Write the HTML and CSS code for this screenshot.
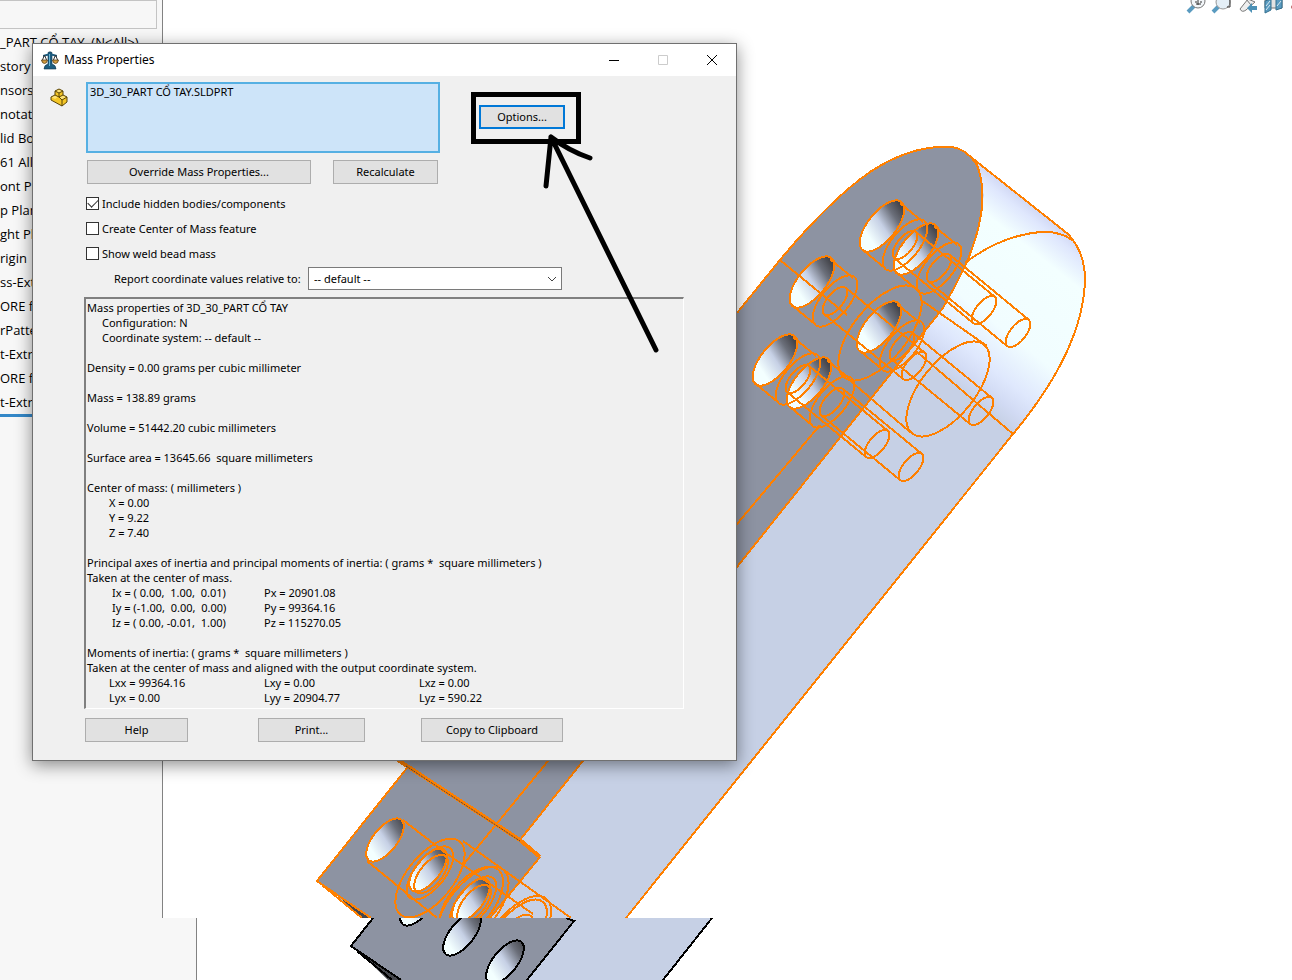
FILE: index.html
```html
<!DOCTYPE html>
<html lang="en">
<head>
<meta charset="utf-8">
<title>Mass Properties</title>
<link rel="stylesheet" href="styles.css">
</head>
<body>
<main class="desktop">
  <aside class="tree">
    <div class="tree-filter"></div>
    <ul class="tree-list">
      <li>_PART CỔ TAY&nbsp; (N&lt;All&gt;)</li>
      <li>story</li>
      <li>nsors</li>
      <li>notations</li>
      <li>lid Bodies</li>
      <li>61 Alloy</li>
      <li>ont Plane</li>
      <li>p Plane</li>
      <li>ght Plane</li>
      <li>rigin</li>
      <li>ss-Extrude</li>
      <li>ORE for</li>
      <li>rPattern</li>
      <li>t-Extrude</li>
      <li>ORE for</li>
      <li>t-Extrude</li>
    </ul>
    <div class="rollback"></div>
  </aside>

  <svg class="viewport" viewBox="0 0 1292 980" preserveAspectRatio="xMinYMin slice" aria-hidden="true">
    <defs>
      <clipPath id="upper"><rect x="163" y="0" width="1129" height="918"/></clipPath>
      <clipPath id="lower"><rect x="197" y="918" width="1095" height="62"/></clipPath>
      <linearGradient id="cap" gradientUnits="userSpaceOnUse" x1="1013" y1="434" x2="1131" y2="286">
        <stop offset="0" stop-color="#c6d0e5"/><stop offset=".1" stop-color="#d2dbf4"/>
        <stop offset=".2" stop-color="#dfe8fd"/>
        <stop offset=".4" stop-color="#f1fdff"/><stop offset=".82" stop-color="#f3ffff"/>
        <stop offset=".95" stop-color="#dfe7fd"/><stop offset="1" stop-color="#d3daf5"/>
      </linearGradient>
      <linearGradient id="bore" gradientUnits="userSpaceOnUse" x1="25" y1="8" x2="-16" y2="-5">
        <stop offset="0" stop-color="#45464c"/><stop offset=".25" stop-color="#6b6f7a"/>
        <stop offset=".6" stop-color="#c6d0e5"/><stop offset="1" stop-color="#f3ffff"/>
      </linearGradient>
      <ellipse id="hole" rx="31" ry="14" transform="rotate(-51)"/>
      <ellipse id="hole-sm" rx="26" ry="12" transform="rotate(-51)"/>
      <g id="shaft">
        <use href="#hole"/>
        <use href="#hole" x="23" y="19"/>
        <ellipse rx="17" ry="8" transform="translate(23 19) rotate(-51)"/>
        <ellipse rx="17" ry="8" transform="translate(102 84) rotate(-51)"/>
        <path d="M18-23l23 19M-19 24l23 19M34 6l79 65M12 32l79 65"/>
      </g>
    </defs>

    <g clip-path="url(#upper)">
      <path fill="#c6d0e5" d="M967 154L1068 234Q1085 252 1085 280Q1083 350 1013 434L626 918H480L520 839Z"/>
      <path fill="url(#cap)" d="M967 154L1068 234Q1085 252 1085 280Q1083 350 1013 434L880 380L966 264L984 195Z"/>
      <path fill="#8d93a2" d="M398 760L737 313L780 260Q830 200 870 172Q911 145 950 147Q966 148 977 165Q992 203 966 264Q955 287 943 308L737 567L520 840L540 857L490 918H371L317 881L407 768Z"/>
      <path fill="#45464c" d="M330 889L371 918H362Z"/>
      <g fill="url(#bore)">
        <use href="#hole" x="882" y="226"/><use href="#hole" x="916" y="249"/>
        <use href="#hole" x="812" y="282"/><use href="#hole" x="879" y="327"/>
        <use href="#hole" x="775" y="360"/><use href="#hole" x="809" y="383"/>
        <use href="#hole-sm" x="385" y="840"/><use href="#hole-sm" x="428" y="870"/>
        <use href="#hole-sm" x="471" y="900"/>
      </g>
      <g class="wire">
        <path d="M737 313L780 260Q830 200 870 172Q911 145 950 147Q966 148 977 165Q992 203 966 264Q955 287 943 308L737 567L520 840"/>
        <path d="M967 154L1068 234Q1085 252 1085 280Q1083 350 1013 434L626 918"/>
        <path d="M965 263Q1000 236 1040 232Q1060 231 1072 240"/>
        <path d="M820 425L737 524L548 761L463 865"/>
        <path d="M780 260L847 315M917 352L1013 434M921 300L987 346M847 378L910 432"/>
        <ellipse rx="57" ry="27" transform="translate(948 389) rotate(-51)"/>
        <ellipse rx="57" ry="27" transform="translate(880 333) rotate(-51)"/>
        <use href="#shaft" x="882" y="226"/><use href="#shaft" x="916" y="249"/>
        <use href="#shaft" x="812" y="282"/><use href="#shaft" x="879" y="327"/>
        <use href="#shaft" x="775" y="360"/><use href="#shaft" x="809" y="383"/>
        <path d="M407 768L317 881L371 918M322 885L362 918M540 857L490 918"/>
        <path stroke-width="4" d="M398 760L520 840L540 857"/>
        <use href="#hole-sm" x="385" y="840"/><use href="#hole-sm" x="428" y="870"/>
        <use href="#hole-sm" x="471" y="900"/>
        <ellipse rx="23" ry="11" transform="translate(431 874) rotate(-51)"/>
        <ellipse rx="32" ry="15" transform="translate(430 873) rotate(-51)"/>
        <ellipse rx="47" ry="23" transform="translate(430 878) rotate(-51)"/>
        <ellipse rx="23" ry="11" transform="translate(474 904) rotate(-51)"/>
        <ellipse rx="32" ry="15" transform="translate(473 903) rotate(-51)"/>
        <ellipse rx="43" ry="22" transform="translate(471 903) rotate(-51)"/>
        <ellipse rx="48" ry="24" transform="translate(473 907) rotate(-51)"/>
        <ellipse rx="48" ry="23" transform="translate(516 936) rotate(-51)"/>
        <ellipse rx="44" ry="20" transform="translate(515 936) rotate(-51)"/>
        <ellipse rx="22" ry="11" transform="translate(517 933) rotate(-51)"/>
        <path d="M403 820L443 851L533 914M367 861L437 918M463 841L571 918"/>
      </g>
      <path stroke="#45464c" stroke-dasharray="2 1" fill="none" d="M406 766L520 841"/>
    </g>

    <g clip-path="url(#lower)">
      <path fill="#c6d0e5" d="M560 910H718L663 980H520Z"/>
      <path fill="#8d93a2" d="M373 918H570L574 921L527 980H400L351 946Z"/>
      <path fill="#45464c" d="M358 951L402 980H388Z"/>
      <g fill="url(#bore)">
        <use href="#hole-sm" x="419" y="904"/><use href="#hole-sm" x="462" y="934"/>
        <use href="#hole-sm" x="505" y="962"/>
      </g>
      <g class="wire wire-dark">
        <use href="#hole-sm" x="419" y="904"/><use href="#hole-sm" x="462" y="934"/>
        <use href="#hole-sm" x="505" y="962"/>
        <path d="M373 918L351 946L401 980M357 951L392 980M566 918L574 921L527 980M712 918L663 980"/>
      </g>
    </g>

    <g fill="none">
      <g stroke="#5a9bc0" stroke-width="4"><path d="M1188 12l6-6M1213 12l6-6"/></g>
      <circle cx="1198" cy="1" r="7" fill="#f2f6f9" stroke="#777"/><path stroke="#333" d="M1195 2h2M1200 2h2M1198 0v5M1196 4h5"/>
      <circle cx="1223" cy="2" r="7" fill="#e4eff7" stroke="#999"/><path stroke="#333" d="M1230 0v7h-3"/>
      <path fill="#eee" stroke="#777" d="M1240 9l8-10 7 3-9 8q-4 3-6-1zM1246-1l5 6"/>
      <path fill="#4d91b6" d="M1247 8l5-5v3h5v4h-5v3z"/>
      <path fill="#e3e3e3" stroke="#777" d="M1265-1h17v9h-17z"/>
      <path fill="#5a9bc0" stroke="#34708f" d="M1265 1l6-2v11l-6 3zM1276-1h6v9l-6 2z"/>
      <path stroke="#d6e9f2" d="M1266 6l4-5M1266 10l4-5M1277 6l4-5"/>
      <circle cx="1293" cy="7" r="2" fill="#b66"/>
    </g>
  </svg>
  <div class="lower-panel"></div>

  <section class="dialog" role="dialog" aria-labelledby="dlg-title">
    <header class="titlebar">
      <svg class="app-icon" viewBox="0 0 18 19" aria-hidden="true">
        <path fill="#1d5d80" stroke="#12384e" stroke-width=".6" d="M7 1.500Q9 0 11 1.500V13Q15 14 15 18H3Q3 14 7 13z"/>
        <path fill="#1d5d80" d="M2 4Q9 1 16 4v2Q9 3 2 6z"/>
        <path fill="none" stroke="#333" d="M3.500 4L1 10M3.500 4L6 10M14.500 4L12 10M14.500 4L17 10"/>
        <path fill="#d19a3c" stroke="#5b421e" stroke-width=".8" d="M.5 9h6Q6 12.500 3.500 12.500T.5 9zM11.500 9h6Q17 12.500 14.500 12.500T11.500 9z"/>
        <path stroke="#67b5d6" d="M8.500 3v12"/>
      </svg>
      <h1 id="dlg-title">Mass Properties</h1>
      <div class="window-buttons">
        <button type="button" aria-label="Minimize"><svg viewBox="0 0 12 12"><path d="M1 6.500h10"/></svg></button>
        <button type="button" aria-label="Maximize" disabled><svg viewBox="0 0 12 12"><path d="M1.500 1.500h9v9h-9z"/></svg></button>
        <button type="button" aria-label="Close"><svg viewBox="0 0 12 12"><path d="M1 1l10 10M11 1L1 11"/></svg></button>
      </div>
    </header>

    <div class="dialog-body">
      <div class="selection-row">
        <svg class="part-icon" viewBox="0 0 18 19" aria-hidden="true">
          <path fill="#f4c626" d="M1 9l4-2V3l4-2 4 2v4l4 2v5l-5 4L1 12z"/>
          <path fill="#ffe374" d="M5 3l4-2 4 2-4 2zM1 9l4-2 3 2-3 2zM9 9l4-2 4 2-5 3z"/>
          <path fill="none" stroke="#594408" stroke-linejoin="round" d="M1 9l4-2V3l4-2 4 2v4l4 2v5l-5 4L1 12zM5 3l4 2 4-2M9 5v4l4-2M9 9l3 3 5-3M12 12v6M5 7l4 2"/>
        </svg>
        <textarea class="selection" aria-label="Selected items" readonly spellcheck="false">3D_30_PART CỔ TAY.SLDPRT</textarea>
        <button type="button" class="btn btn-focus">Options...</button>
      </div>
      <div class="action-row">
        <button type="button" class="btn btn-override">Override Mass Properties...</button>
        <button type="button" class="btn">Recalculate</button>
      </div>
      <div class="checks">
        <label><input type="checkbox" checked>Include hidden bodies/components</label>
        <label><input type="checkbox">Create Center of Mass feature</label>
        <label><input type="checkbox">Show weld bead mass</label>
      </div>
      <div class="coord-row">
        <label for="coord">Report coordinate values relative to:</label>
        <span class="combo">
          <select id="coord"><option>-- default --</option></select>
          <svg viewBox="0 0 10 6" aria-hidden="true"><path d="M1 1l4 4 4-4"/></svg>
        </span>
      </div>
      <div class="report">
        <p>Mass properties of 3D_30_PART CỔ TAY</p>
        <p class="in-1">Configuration: N</p>
        <p class="in-1">Coordinate system: -- default --</p>
        <p class="gap">Density = 0.00 grams per cubic millimeter</p>
        <p class="gap">Mass = 138.89 grams</p>
        <p class="gap">Volume = 51442.20 cubic millimeters</p>
        <p class="gap">Surface area = 13645.66&nbsp; square millimeters</p>
        <p class="gap">Center of mass: ( millimeters )</p>
        <p class="in-2">X = 0.00</p>
        <p class="in-2">Y = 9.22</p>
        <p class="in-2">Z = 7.40</p>
        <p class="gap">Principal axes of inertia and principal moments of inertia: ( grams *&nbsp; square millimeters )</p>
        <p>Taken at the center of mass.</p>
        <table class="axes">
          <tr><td>Ix = ( 0.00,&nbsp; 1.00,&nbsp; 0.01)</td><td>Px = 20901.08</td><td></td></tr>
          <tr><td>Iy = (-1.00,&nbsp; 0.00,&nbsp; 0.00)</td><td>Py = 99364.16</td><td></td></tr>
          <tr><td>Iz = ( 0.00, -0.01,&nbsp; 1.00)</td><td>Pz = 115270.05</td><td></td></tr>
        </table>
        <p class="gap">Moments of inertia: ( grams *&nbsp; square millimeters )</p>
        <p>Taken at the center of mass and aligned with the output coordinate system.</p>
        <table>
          <tr><td>Lxx = 99364.16</td><td>Lxy = 0.00</td><td>Lxz = 0.00</td></tr>
          <tr><td>Lyx = 0.00</td><td>Lyy = 20904.77</td><td>Lyz = 590.22</td></tr>
        </table>
      </div>
      <footer class="dialog-footer">
        <button type="button" class="btn btn-help">Help</button>
        <button type="button" class="btn btn-print">Print...</button>
        <button type="button" class="btn btn-copy">Copy to Clipboard</button>
      </footer>
    </div>

    <svg class="callout" viewBox="0 0 192 264" aria-hidden="true">
      <path stroke-linejoin="miter" d="M5.500 5.500h105v47h-105z"/>
      <path stroke-linecap="round" d="M83 48l105 213M83 48l-5 49M83 48q18 14 39 21"/>
    </svg>
  </section>
</main>
</body>
</html>
```
FILE: styles.css
```css
* { box-sizing: border-box; }

body {
  margin: 0;
  background: #fff;
  color: #000;
  font: 11px/15px "Noto Sans", "Open Sans", sans-serif;
}

.desktop {
  position: relative;
  min-height: 100vh;
  overflow: hidden;
}

/* Feature tree */
.tree {
  position: absolute;
  top: 0;
  left: 0;
  width: 163px;
  height: 918px;
  border-right: 1px solid #828282;
  background: #f7f7f7;
}

.tree-filter {
  height: 29px;
  margin-right: 5px;
  border: 1px solid #c4c4c4;
  border-width: 1px 1px 1px 0;
}

.tree-list {
  margin: 0;
  padding: 1px 0 0;
  list-style: none;
  font-family: "Open Sans", sans-serif;
  font-size: 13px;
  line-height: 24px;
  white-space: nowrap;
}

.rollback { height: 3px; margin-right: 5px; background: #3488c8; }

.lower-panel {
  position: absolute;
  top: 918px;
  bottom: 0;
  left: 0;
  width: 197px;
  border-right: 1px solid #828282;
  background: #f7f7f7;
}

/* Model view */
.viewport {
  position: absolute;
  inset: 0;
  width: 100%;
  height: 100%;
}

.wire {
  fill: none;
  stroke: #ff8000;
  stroke-width: 2;
  shape-rendering: crispEdges;
}

.wire-dark { stroke: #000; }

/* Dialog */
.dialog {
  position: absolute;
  top: 43px;
  left: 32px;
  width: 705px;
  max-width: calc(100vw - 32px);
  border: 1px solid #707070;
  background: #f0f0f0;
  box-shadow: 0 4px 16px rgba(0, 0, 0, .45);
}

.titlebar {
  display: flex;
  align-items: center;
  height: 32px;
  padding-left: 8px;
  background: #fff;
}

.app-icon { width: 18px; height: 19px; }

.titlebar h1 {
  margin: 0 0 0 5px;
  font-size: 12px;
  font-weight: 400;
  line-height: 16px;
}

.window-buttons { display: flex; align-self: flex-start; margin-left: auto; }

.window-buttons button {
  width: 49px;
  height: 30px;
  padding: 0;
  border: 0;
  background: transparent;
}

.window-buttons svg {
  width: 12px;
  height: 12px;
  fill: none;
  stroke: #000;
  vertical-align: middle;
}

.window-buttons button:disabled svg { stroke: #ccc; }

.dialog-body { padding: 6px 52px 18px 53px; }

.selection-row { display: flex; align-items: flex-start; margin-left: -37px; }

.part-icon { width: 20px; height: 19px; margin: 6px 17px 0 0; }

.selection {
  width: 354px;
  height: 71px;
  padding: 0 2px;
  border: 2px solid #56b0e3;
  outline: 0;
  background: #cde4f9;
  color: inherit;
  font: inherit;
  resize: none;
}

.btn {
  width: 105px;
  height: 24px;
  padding: 0 0 1px;
  border: 1px solid #adadad;
  background: #e1e1e1;
  color: inherit;
  font: inherit;
}

.btn-focus {
  width: 86px;
  margin: 23px 0 0 39px;
  border: 2px solid #0078d7;
}

.action-row { display: flex; gap: 22px; margin: 7px 0 0 1px; }
.btn-override { width: 224px; }

.checks { display: grid; gap: 10px; margin-top: 12px; }
.checks label { display: flex; align-items: center; gap: 3px; }

.checks input {
  display: grid;
  place-content: center;
  width: 13px;
  height: 13px;
  margin: 0;
  border: 1px solid #333;
  background: #fff;
  appearance: none;
}

.checks input:checked::before {
  content: "";
  width: 9px;
  height: 5px;
  margin-bottom: 3px;
  border: solid #333;
  border-width: 0 0 1px 1px;
  transform: rotate(-45deg);
}

.coord-row { display: flex; align-items: center; margin: 6px 0 0 28px; }
.coord-row label { width: 194px; white-space: nowrap; }

.combo { position: relative; width: 254px; }

.combo select {
  display: block;
  width: 100%;
  height: 23px;
  padding: 0 5px;
  border: 1px solid #7a7a7a;
  border-radius: 0;
  background: #fff;
  color: inherit;
  font: inherit;
  appearance: none;
}

.combo svg {
  position: absolute;
  top: 9px;
  right: 5px;
  width: 10px;
  height: 6px;
  fill: none;
  stroke: #444;
  pointer-events: none;
}

.report {
  margin: 7px 0 0 -2px;
  padding: 1px 1px 3px;
  border: solid #fff;
  border-width: 2px 1px 1px 2px;
  border-top-color: #808080;
  border-left-color: #808080;
  white-space: nowrap;
}

.report p { margin: 0; }
.report .gap { margin-top: 15px; }
.report .in-1 { padding-left: 15px; }
.report .in-2 { padding-left: 22px; }

.report table {
  width: 465px;
  margin-left: 22px;
  border-collapse: collapse;
  table-layout: fixed;
}

.report td { padding: 0; }
.report .axes td:first-child { padding-left: 3px; }

.dialog-footer { display: flex; margin: 9px 0 0 -1px; }
.btn-help { width: 103px; }
.btn-print { width: 107px; margin-left: 70px; }
.btn-copy { width: 142px; margin-left: 56px; }

/* Hand-drawn marker over the Options button */
.callout {
  position: absolute;
  top: 45px;
  left: 435px;
  width: 192px;
  height: 264px;
  fill: none;
  stroke: #000;
  stroke-width: 5;
  pointer-events: none;
}
```
